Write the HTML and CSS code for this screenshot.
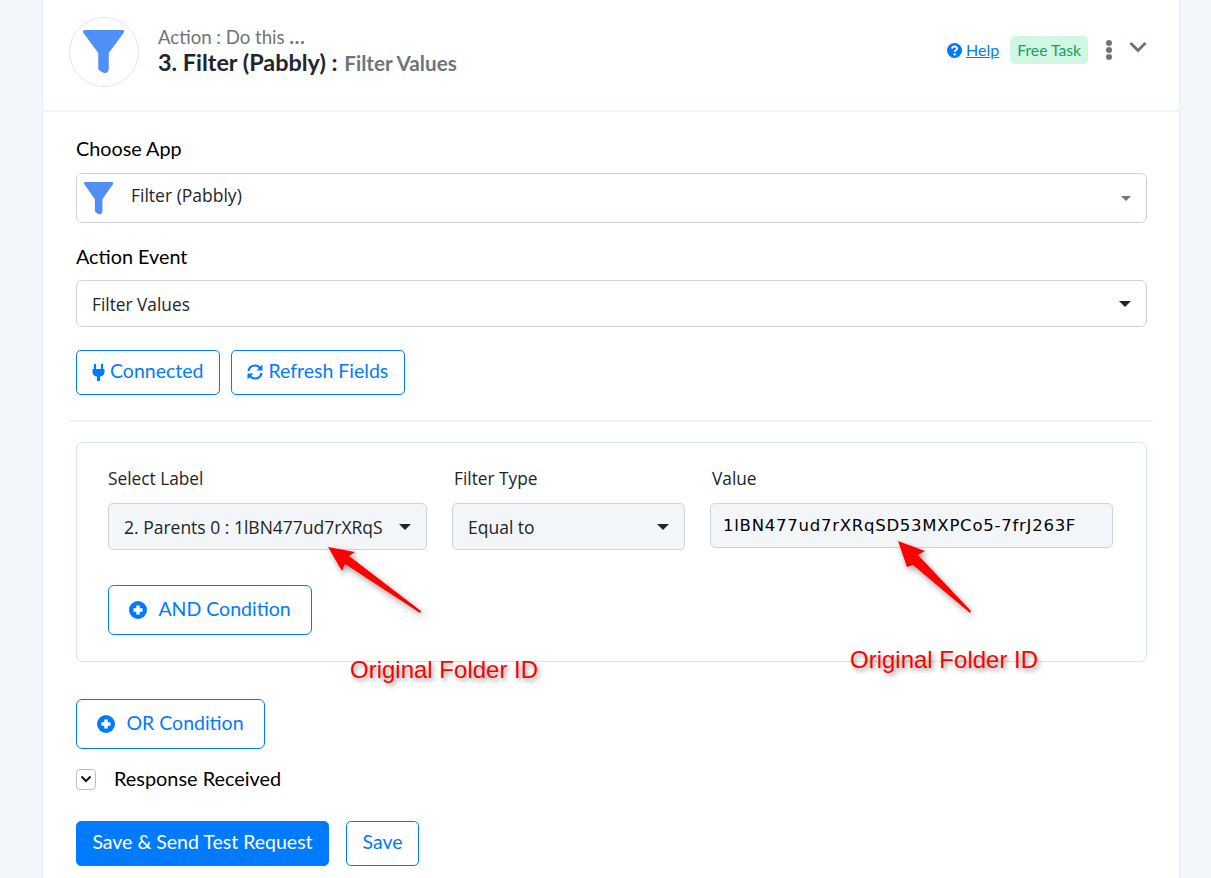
FILE: index.html
```html
<!DOCTYPE html>
<html lang="en">
<head>
<meta charset="utf-8">
<title>Filter (Pabbly)</title>
<link rel="stylesheet" href="styles.css">
</head>
<body>
<main class="card">
  <svg width="0" height="0" class="defs" aria-hidden="true">
    <defs>
      <path id="funnel" d="M2 0H41Q44 0 42.500 3L27 24V40Q27 45 23 45Q20 45 16 41V24L0.500 3Q-1 0 2 0Z"/>
      <g id="plus-circle"><circle cx="9" cy="9" r="9" fill="#007bff"/><path d="M9 4.500V13.500M4.500 9H13.500" stroke="#fff" stroke-width="3.400" fill="none"/></g>
      <filter id="soft" x="-30%" y="-30%" width="170%" height="170%"><feDropShadow dx="2" dy="3" stdDeviation="3" flood-color="#000" flood-opacity=".4"/></filter>
    </defs>
  </svg>
  <header class="head">
    <div class="logo"><svg width="42" height="46" viewBox="0 0 44 46"><use href="#funnel" fill="#4f8ff7"/></svg></div>
    <div class="titles">
      <div class="kicker">Action : Do this <b>...</b></div>
      <div class="title">3. Filter (Pabbly) : <span>Filter Values</span></div>
    </div>
    <div class="tools">
      <svg class="q" width="15" height="15" viewBox="0 0 15 15"><circle cx="7.500" cy="7.500" r="7.500" fill="#007bff"/><path d="M5 5.800C5.200 2.800 10 2.900 10 5.500C10 7.300 7.600 7.300 7.600 9" stroke="#fff" stroke-width="1.900" fill="none"/><circle cx="7.600" cy="11.300" r="1.200" fill="#fff"/></svg>
      <a class="help" href="#">Help</a>
      <span class="badge">Free Task</span>
      <svg class="dots" width="8" height="20" viewBox="0 0 8 20"><circle cx="4" cy="3" r="3" fill="#6c757d"/><circle cx="4" cy="10" r="3" fill="#6c757d"/><circle cx="4" cy="17" r="3" fill="#6c757d"/></svg>
      <svg class="chev" width="18" height="12" viewBox="0 0 18 12"><path d="M1.500 2L9 9.500L16.500 2" stroke="#6c757d" stroke-width="3" fill="none"/></svg>
    </div>
  </header>
  <section class="body">
    <div class="label first">Choose App</div>
    <div class="select app">
      <svg width="30" height="33" viewBox="0 0 44 46" preserveAspectRatio="none"><use href="#funnel" fill="#4f8ff7"/></svg>
      <span>Filter (Pabbly)</span>
      <i class="caret grey"></i>
    </div>
    <div class="label second">Action Event</div>
    <div class="select event"><span>Filter Values</span><i class="caret"></i></div>
    <div class="btns">
      <a class="btn small">
        <svg width="13" height="17" viewBox="0 0 13 17"><path d="M3 0V5M10 0V5" stroke="#007bff" stroke-width="2.200"/><path d="M0.500 5H12.500V8C12.500 11 10 12.500 8 12.500V17H5V12.500C3 12.500 0.500 11 0.500 8Z" fill="#007bff"/></svg>
        Connected</a>
      <a class="btn small">
        <svg width="16" height="16" viewBox="0 0 16 16"><path d="M1.500 7C2 3.500 5 1.500 8 1.500C10 1.500 12 2.500 13 4" stroke="#007bff" stroke-width="2.200" fill="none"/><path d="M15.500 0.500V6.500H9.500Z" fill="#007bff"/><path d="M14.500 9C14 12.500 11 14.500 8 14.500C6 14.500 4 13.500 3 12" stroke="#007bff" stroke-width="2.200" fill="none"/><path d="M0.500 15.500V9.500H6.500Z" fill="#007bff"/></svg>
        Refresh Fields</a>
    </div>
    <hr class="rule">
    <div class="panel">
      <div class="fields">
        <div class="field f1"><div class="flabel">Select Label</div><div class="box"><span>2. Parents 0 : 1lBN477ud7rXRqS</span><i class="caret"></i></div></div>
        <div class="field f2"><div class="flabel">Filter Type</div><div class="box"><span>Equal to</span><i class="caret"></i></div></div>
        <div class="field f3"><div class="flabel">Value</div><div class="box value">1lBN477ud7rXRqSD53MXPCo5-7frJ263F</div></div>
      </div>
      <a class="btn big and"><svg width="18" height="18" viewBox="0 0 18 18"><use href="#plus-circle"/></svg>AND Condition</a>
    </div>
    <a class="btn big or"><svg width="18" height="18" viewBox="0 0 18 18"><use href="#plus-circle"/></svg>OR Condition</a>
    <div class="resp">
      <span class="toggle"><svg width="12" height="8" viewBox="0 0 12 8"><path d="M1.500 1.500L6 6L10.500 1.500" stroke="#111" stroke-width="2" fill="none"/></svg></span>
      <span class="resp-text">Response Received</span>
    </div>
    <div class="actions">
      <a class="btn solid">Save &amp; Send Test Request</a>
      <a class="btn small save">Save</a>
    </div>
  </section>
  <svg class="arrow a1" width="110" height="80" viewBox="0 0 110 80"><path d="M8 7L35 12L29 16L101 71L100 73L25 24L22 31Z" fill="#fe0000" filter="url(#soft)"/></svg>
  <svg class="arrow a2" width="90" height="85" viewBox="0 0 90 85"><path d="M8 8L35 18L28 22L81 78L80 80L23 32L17 34Z" fill="#fe0000" filter="url(#soft)"/></svg>
  <div class="note n1">Original Folder ID</div>
  <div class="note n2">Original Folder ID</div>
</main>
</body>
</html>
```
FILE: styles.css
```css
* { box-sizing: border-box; }
html, body { margin: 0; padding: 0; }
body { background: #f3f6fa; height: 878px; overflow: hidden; font-family: Lato, "Noto Sans", sans-serif; color: #000; }
.defs { position: absolute; }
.card { position: relative; width: 1138px; height: 878px; margin-left: 42px; background: #fff; border-left: 1px solid #e8ecf4; border-right: 1px solid #e8ecf4; }
.head { display: flex; align-items: flex-start; height: 112px; padding: 17px 32px 0 26px; border-bottom: 2px solid #eef4fc; }
.logo { width: 70px; height: 70px; border: 1px solid #dbe6fb; border-radius: 50%; display: flex; align-items: center; justify-content: center; }
.titles { margin-left: 19px; padding-top: 7px; }
.kicker { font-size: 18.600px; line-height: 26px; color: #6c757d; }
.kicker b { font-weight: 900; letter-spacing: 1px; }
.title { font-size: 23.400px; line-height: 24px; font-weight: 700; color: #212529; }
.title span { font-size: 20.700px; color: #6c757d; margin-left: 1px; }
.tools { margin-left: auto; display: flex; align-items: center; height: 32px; margin-top: 17px; }
.q { margin-right: 4px; }
.help { font-size: 16px; color: #007bff; text-decoration: underline; margin-right: 11px; margin-bottom: 2px; }
.badge { background: #d1f7e4; color: #17a05d; font-size: 15.700px; height: 28px; line-height: 28px; padding: 0 7px; border-radius: 5px; margin-right: 17px; }
.dots { margin-right: 16px; }
.chev { margin-top: -6px; }
.body { padding: 0 32px 0 33px; }
.label { font-size: 19.800px; line-height: 24px; }
.label.first { margin-top: 24px; }
.label.second { margin-top: 21px; }
.select { display: flex; align-items: center; border: 1px solid #ced4da; border-radius: 6px; margin-top: 13px; font-family: "Open Sans", sans-serif; font-size: 17.300px; color: #212529; }
.select.app { height: 50px; padding: 0 15px 0 7px; }
.select.app span { margin-left: 17px; margin-bottom: 6px; font-size: 17.500px; }
.select.event { height: 47px; padding: 0 15px; margin-top: 12px; }
.select.event span { margin-top: 2px; }
.caret { margin-left: auto; width: 0; height: 0; border-left: 6px solid transparent; border-right: 6px solid transparent; border-top: 6px solid #212529; flex: none; }
.caret.grey { border-left-width: 5px; border-right-width: 5px; border-top-width: 5px; border-top-color: #6c757d; }
.btn { display: inline-flex; align-items: center; justify-content: center; border: 1px solid #007bff; border-radius: 5px; color: #007bff; font-size: 19.500px; padding-bottom: 4px; }
.btn svg { margin-top: 3px; }
.small { height: 45px; padding-left: 15px; padding-right: 16px; gap: 5px; }
.btns { display: flex; gap: 11px; margin-top: 23px; }
.rule { border: 0; border-top: 2px solid #eef4fc; margin: 25px -6px 0 -7px; }
.panel { border: 1px solid #d7e3fa; border-radius: 6px; margin-top: 20px; height: 220px; padding: 23px 32px 0 31px; }
.fields { display: flex; }
.flabel { font-family: "Open Sans", sans-serif; font-size: 17.300px; line-height: 24px; padding-top: 1px; color: #212529; }
.f2 .flabel, .f3 .flabel { padding-left: 2px; }
.f1 { width: 319px; margin-right: 25px; }
.f2 { width: 233px; margin-right: 25px; }
.f3 { width: 403px; }
.box { display: flex; align-items: center; height: 47px; margin-top: 12px; padding: 0 15px; background: #f3f6f9; border: 1px solid #ced4da; border-radius: 5px; font-family: "Open Sans", sans-serif; font-size: 17.500px; color: #212529; white-space: nowrap; }
.f1 .box span { overflow: hidden; }
.value { height: 45px; font-family: "DejaVu Sans", sans-serif; font-size: 16.500px; letter-spacing: .75px; color: #000; padding: 0 12px; }
.big { height: 50px; gap: 11px; border-radius: 6px; }
.and { width: 204px; margin-top: 35px; }
.or { width: 189px; margin-top: 37px; }
.resp { display: flex; align-items: center; gap: 18px; font-size: 19.900px; margin-top: 18px; height: 24px; }
.resp-text { margin-bottom: 2px; }
.toggle { width: 20px; height: 21px; border: 1px solid #b8bec6; border-radius: 4px; display: flex; align-items: center; justify-content: center; }
.actions { display: flex; gap: 17px; margin-top: 30px; }
.solid { height: 45px; width: 253px; background: #007bff; color: #fff; }
.save { width: 73px; padding-left: 0; padding-right: 0; }
.arrow { position: absolute; overflow: visible; }
.a1 { left: 277px; top: 540px; }
.a2 { left: 847px; top: 533px; }
.note { position: absolute; font-family: "Liberation Sans", Arial, sans-serif; font-size: 24px; line-height: 28px; color: #fe0000; text-shadow: 2px 3px 4px rgba(0,0,0,.4); white-space: nowrap; }
.n1 { left: 307px; top: 656px; }
.n2 { left: 807px; top: 646px; }
```
